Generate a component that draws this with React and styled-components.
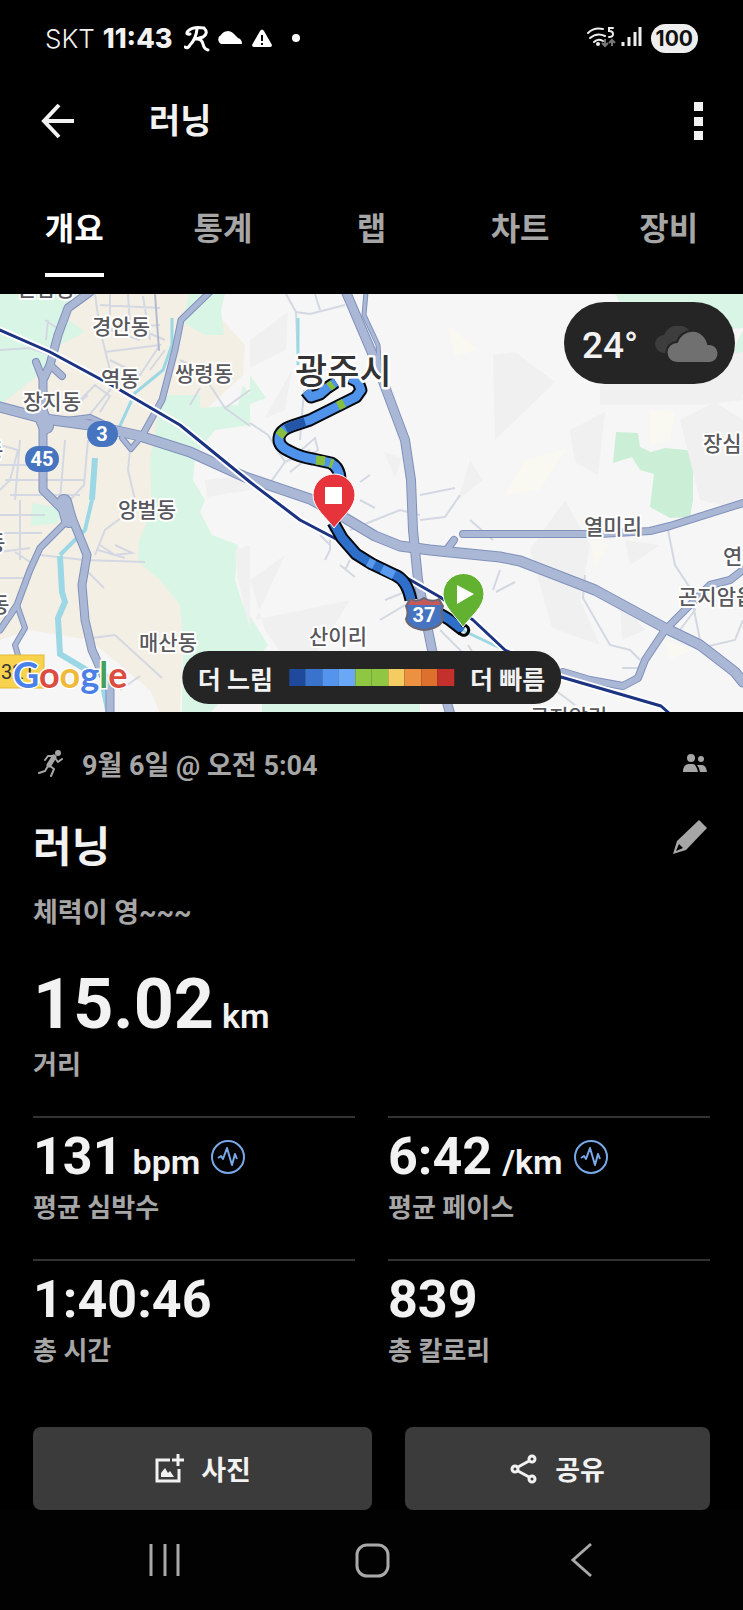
import React from 'react'
import styled, { createGlobalStyle } from 'styled-components'

const TABS = ['개요', '통계', '랩', '차트', '장비']

const SPEED_COLORS = ['#1f4a9c', '#3a73cb', '#5594ec', '#6aa7f7', '#8fc742', '#8fc742', '#f5cc62', '#ec9140', '#dd702c', '#c4302b']

const STATS = [
  { value: '131', unit: 'bpm', label: '평균 심박수', chart: true },
  { value: '6:42', unit: '/km', label: '평균 페이스', chart: true },
  { value: '1:40:46', label: '총 시간' },
  { value: '839', label: '총 칼로리' },
]

const PLACES = [
  { name: '안남동', x: 17, y: 296 },
  { name: '경안동', x: 92, y: 334 },
  { name: '역동', x: 101, y: 386 },
  { name: '쌍령동', x: 175, y: 381 },
  { name: '장지동', x: 23, y: 409 },
  { name: '양벌동', x: 118, y: 517 },
  { name: '매산동', x: 139, y: 650 },
  { name: '산이리', x: 309, y: 644 },
  { name: '열미리', x: 584, y: 534 },
  { name: '장심', x: 703, y: 451 },
  { name: '연', x: 723, y: 564 },
  { name: '곤지암읍', x: 678, y: 604 },
  { name: '곤지암리', x: 530, y: 724 },
  { name: '동', x: -16, y: 458 },
  { name: '동', x: -14, y: 550 },
  { name: '동', x: -10, y: 612 },
]

const ROADS = [
  { w: 9, d: 'M0 407 45 419 90 425 140 436 190 452 245 477 310 499 345 518 375 536 400 546 430 550 500 557 520 561 595 590 665 628 700 645 735 672 743 682' },
  { w: 7, d: 'M90 292 68 308 58 335 50 365 43 380V490L60 507 68 515' },
  { w: 6, d: 'M36 362 43 380 M50 365 62 376' },
  { w: 14, d: 'M40 412 46 426 M64 502 69 520' },
  { w: 5, d: 'M70 518 40 548 30 570 17 605 0 630' },
  { w: 7, d: 'M72 518 87 555 82 585 85 620 92 650 110 690V713' },
  { w: 4, d: 'M17 605 25 628 15 645 20 662 M50 422 90 417 105 424' },
  { w: 5, d: 'M210 292 181 320 175 350 162 400 142 436' },
  { w: 4, d: 'M142 436 131 449 122 438' },
  { w: 8, d: 'M346 292 375 360 387 392 405 440 411 480 413 530 418 580 432 650 450 713' },
  { w: 3, d: 'M366 292 364 315 378 345 380 375' },
  { w: 6, d: 'M463 534H600L650 531 670 526 743 503' },
  { w: 6, d: 'M448 548 454 540' },
  { w: 6, d: 'M743 570 730 580 710 585 690 605 665 630 645 660 638 678 623 686 590 680 563 672' },
]

const LANES =
  'M95 294 100 330 110 370 M110 294V330L140 340 M128 294 130 325 165 340 M100 305 160 308 M143 296 150 340 M95 330 160 325 M105 352 160 345 140 375 110 360' +
  'M0 350 30 348 70 362 M45 320 60 330 M48 320 46 340 M80 400 95 385 110 396 100 412 M85 420 110 390 125 375 M150 370 165 350 M88 395 70 410' +
  'M0 445 18 450 10 480 0 490 M5 480H85 M10 495H80 M20 440 15 500 M0 465H40 M65 440 60 500 M88 440 84 485 70 500' +
  'M0 515H45 M0 533H42 M20 500V560 M0 552 30 548 M0 578H30 M15 552 30 562 M40 555 85 560 145 562 M95 555 105 530 125 515 M98 550 125 558 M100 545 115 555 132 553 115 545' +
  'M88 572 104 588 M92 638 115 635 162 678 M120 690 140 676 M180 360 200 370 225 408 250 426 M200 388 190 405 M225 408 250 390 M130 450 128 470 135 500' +
  'M286 294 296 312 310 314 345 305 M315 294 320 310 M296 312 298 360 M304 390 300 440 M250 423 268 435 285 462 265 490 M285 462 310 450 M290 460 315 438 318 450 290 472' +
  'M330 530V550L325 560 M350 530 400 510 420 515 M360 482 370 475 M420 495 430 493 455 488 M360 500 375 508 M420 520 445 517 460 495 M320 535 330 545 M340 565 355 577' +
  'M385 600 410 590 M380 620 405 605 M345 570 350 560 M470 520 493 540 M500 570 493 590 M515 582 496 592 M668 530 675 565 690 588 695 610 680 630 M585 575 583 598 610 645 630 650 640 660 M680 632 705 647 735 640 743 620' +
  'M622 668H640 M690 590 700 640 M555 690 575 705 M440 630 500 690 M468 645 490 680'

const RIVERS = [
  { w: 3, d: 'M172 318V345L163 370 135 393 118 430' },
  { w: 6, d: 'M95 458 92 500' },
  { w: 4, d: 'M92 500 85 530 60 555' },
  { w: 6, d: 'M60 556 62 592 65 602 58 618 60 654 90 672' },
  { w: 5, d: 'M103 688 108 712' },
  { w: 3, d: 'M298 318V365 M462 630 500 648' },
]

const ROUTE_NORTH = 'M350 378 358 382 361 390 356 397 340 405 310 420 292 426Q280 430 279 438T289 451Q300 457 313 459L331 463Q340 468 340 480'
const ROUTE_LOOP = 'M306 391 311 397 320 394 327 388 336 382'
const ROUTE_SOUTH = 'M333 522 342 538 356 554 372 564 395 575Q407 580 411 600M440 614 450 620 463 630'

function MapDrawing() {
  return (
    <MapSvg viewBox="0 294 743 418" preserveAspectRatio="xMidYMid slice" role="img" aria-label="러닝 경로 지도">
      <rect y="290" width="743" height="430" fill="#f6f6f6" />
      <path d="M0 290H195L245 345 243 375 200 415 160 420 160 520 185 600 180 713H160L150 690 90 640 30 630 0 640Z" fill="#f4efe4" />
      <g fill="#d9f5e5">
        <path d="M0 290H80L62 315 85 332 50 350 55 362 0 405Z" />
        <path d="M32 503 60 508 58 523 31 526Z" />
        <path d="M190 290H226L221 310 224 335 205 335 182 322Z" />
        <path d="M165 395 200 395 200 408 238 405 243 385 250 395V425L215 430 195 455 193 480 205 500 200 512 212 535 238 545 235 580 243 605 268 645 210 713H182L183 640 180 605 160 580 138 562 139 540 152 510 150 460 158 415Z" />
        <path d="M250 375 266 398 250 404Z" />
        <path d="M613 290H743V328L722 330 705 345 640 340Z" />
        <path d="M743 330 733 350V370H743Z" />
        <path d="M262 704 420 704V713H262Z" />
      </g>
      <path d="M616 432 638 433 640 447 651 452 665 448 687 450 693 458V500L690 517 670 518 650 507 654 474 640 470 632 457 613 463Z" fill="#caefd6" />
      <g fill="#f0f0f0">
        <path d="M250 340 288 312 286 350 250 368Z" />
        <path d="M265 418 292 370 285 410Z" />
        <path d="M493 355 515 352 555 382 495 440Z" />
        <path d="M600 385 735 370 743 400 700 405 600 405Z" />
        <path d="M570 430 605 412 598 475 575 462Z" />
        <path d="M680 420 715 402 743 420V510L700 500Z" />
        <path d="M530 550 565 500 590 545 580 600 600 645 552 628Z" />
        <path d="M625 540 660 545 630 565Z M620 600 645 630 622 640Z" />
        <path d="M250 580 285 555 255 620 350 600 300 680 265 630Z" />
        <path d="M205 480 250 475 250 490 207 497Z M384 452 402 458 395 478Z M470 460 483 480 458 500Z" />
        <path d="M720 355 743 352V395L725 400Z M235 550 250 545V630L238 580Z" />
      </g>
      <g fill="#f9f9f2">
        <path d="M448 325 478 350 455 356Z M650 410 675 412 670 440 650 445Z M525 460 565 450 540 490 505 495Z" />
        <path d="M590 540 610 545 595 565Z M665 640 690 650 670 660Z" />
      </g>
      <path d={LANES} fill="none" stroke="#d3d8e2" strokeWidth="2" />
      {RIVERS.map((river) => (
        <path key={river.d} d={river.d} fill="none" stroke="#9bd7e4" strokeWidth={river.w} />
      ))}
      <g fill="none" strokeLinecap="round" strokeLinejoin="round">
        {ROADS.map((road) => (
          <path key={road.d} d={road.d} stroke="#8091bb" strokeWidth={road.w + 2} />
        ))}
        {ROADS.map((road) => (
          <path key={road.d} d={road.d} stroke="#aab8d6" strokeWidth={road.w} />
        ))}
        <path d="M155 294 159 350" stroke="#b5b9d0" strokeWidth="2" />
        <path d="M0 330 50 352 115 387 180 425 250 482 300 520 340 541 400 574 440 597 473 620 505 650 561 677 661 706 670 714" stroke="#fff" strokeWidth="7" />
        <path d="M0 330 50 352 115 387 180 425 250 482 300 520 340 541 400 574 440 597 473 620 505 650 561 677 661 706 670 714" stroke="#1b3380" strokeWidth="3" />
      </g>
      <g fill="none" strokeLinejoin="round">
        <g stroke="#05080f" strokeWidth="13">
          <path d={ROUTE_NORTH} />
          <path d={ROUTE_LOOP} />
          <path d={ROUTE_SOUTH} />
        </g>
        <g stroke="#4f93ea" strokeWidth="9">
          <path d={ROUTE_NORTH} />
          <path d={ROUTE_LOOP} />
        </g>
        <path d={ROUTE_SOUTH} stroke="#2e6fca" strokeWidth="9" />
        <path d="M305 422 292 426 286 429" stroke="#2456a8" strokeWidth="9" />
        <path d="M338 406 344 403 M284 430 279 436 M316 460 325 461 M330 463 333 464 M329 387 333 384" stroke="#86bf3e" strokeWidth="9" />
        <path d="M368 562 374 565 M382 569 394 575" stroke="#5a9bef" strokeWidth="9" />
        <path d="M461 626A5 5 0 1 1 459 632" stroke="#000" strokeWidth="3" />
      </g>
      <rect x="-2" y="655" width="46" height="33" fill="#f8d24c" stroke="#e2b93a" />
      <RoadNumber x="1" y="679" $dark>321</RoadNumber>
      <rect x="87" y="421" width="31" height="26" rx="13" fill="#4674c1" />
      <RoadNumber x="102" y="441" textAnchor="middle">3</RoadNumber>
      <rect x="25" y="446" width="34" height="26" rx="13" fill="#4674c1" />
      <RoadNumber x="42" y="466" textAnchor="middle">45</RoadNumber>
      {PLACES.map((place) => (
        <PlaceName key={place.name + place.y} x={place.x} y={place.y}>{place.name}</PlaceName>
      ))}
      <PlaceName x="295" y="384" $city>광주시</PlaceName>
      <path d="M410 599Q417 603 424 598 432 603 439 599L443 606Q440 613 443 619 441 628 424 630 408 628 406 619 409 613 406 606Z" fill="#4674c1" stroke="#6b6670" strokeWidth="2" />
      <path d="M411 600Q417 604 424 599 432 604 438 600L441 605H408Z" fill="#c75a58" />
      <RoadNumber x="424" y="622" textAnchor="middle">37</RoadNumber>
      <path d="M334 528C326 517 313 508 313 495A21 21 0 0 1 355 495C355 508 342 517 334 528Z" fill="#e6333c" stroke="#fff" strokeWidth="1" />
      <rect x="325" y="487" width="17" height="17" fill="#fff" />
      <path d="M463 627C456 616 443 607 443 594A20 20 0 0 1 484 594C484 607 471 616 463 627Z" fill="#62b130" stroke="#fff" strokeWidth="1" />
      <path d="M457 585V604L474 594Z" fill="#fff" />
      <Brand x="13" y="688">
        <tspan fill="#4a80e8">G</tspan>
        <tspan fill="#dc4c3f">o</tspan>
        <tspan fill="#efb93a">o</tspan>
        <tspan fill="#4a80e8">g</tspan>
        <tspan fill="#45a05a">l</tspan>
        <tspan fill="#dc4c3f">e</tspan>
      </Brand>
    </MapSvg>
  )
}

const StatusIcons = () => (
  <svg width="116" height="30" viewBox="184 23 116 30" fill="#fff" aria-hidden="true">
    <path d="M190 34Q185 35 188 31 193 26 204 28 209 33 203 37L196 39M197 29Q196 39 190 45 188 49 185 47M197 39Q202 39 203 44T208 50" fill="none" stroke="#fff" strokeWidth="3" strokeLinecap="round" />
    <path d="M221 44A5 5 0 0 1 221 35 8 8 0 0 1 234 34Q237 37 238 38 242 39 242 44Z" />
    <path fillRule="evenodd" d="M260 31Q262 28 264 31L272 45Q272 47 270 47H254Q252 47 252 45ZM261 35V41H263V35ZM261 43V45H263V43Z" />
    <circle cx="296" cy="38" r="4" />
  </svg>
)

const SignalIcons = () => (
  <svg width="56" height="26" viewBox="586 26 56 26" aria-hidden="true">
    <g fill="none" stroke="#eee" strokeWidth="2" strokeLinecap="round">
      <path d="M588 34Q594 28 603 30M590 39Q597 33 605 37M594 43Q598 39 603 42" />
      <path d="M613 29H609V32Q613 32 613 35T609 38" />
    </g>
    <circle cx="598" cy="45" r="2" fill="#eee" />
    <path d="M605 40V47M602 44 605 47 608 44M612 47V41M609 44 612 41 615 44" fill="none" stroke="#777" strokeWidth="2" />
    <path d="M623 43V47M629 38V47M635 33V47M640 28V47" stroke="#eee" strokeWidth="3" />
  </svg>
)

const PulseIcon = () => (
  <svg width="36" height="36" viewBox="0 0 36 36" fill="none" stroke="#78a9e8" strokeWidth="2" aria-hidden="true">
    <circle cx="18" cy="18" r="16" />
    <path d="M8 19 11 17 13 20 17 9 22 26 25 15 27 20" strokeLinejoin="round" />
  </svg>
)

const RunnerIcon = () => (
  <svg width="28" height="28" viewBox="0 0 28 28" fill="none" stroke="#a6a6a6" strokeLinecap="round" strokeLinejoin="round" aria-hidden="true">
    <circle cx="21" cy="4" r="3" fill="#a6a6a6" stroke="none" />
    <path d="M17 8 12 16" strokeWidth="5" />
    <path d="M17 7H11L8 11M18 9 21 13 25 10M13 17 17 20 14 27M11 17 8 22 2 24" strokeWidth="2" />
  </svg>
)

export default function App() {
  return (
    <Screen>
      <GlobalStyle />
      <StatusBar>
        <Carrier>SKT</Carrier>
        <Clock>11:43</Clock>
        <StatusIcons />
        <Spacer />
        <SignalIcons />
        <Battery>100</Battery>
      </StatusBar>

      <Header>
        <IconButton aria-label="뒤로">
          <svg width="34" height="36" viewBox="0 0 34 36" fill="none" stroke="#f2f2f2" strokeWidth="4">
            <path d="M18 2 3 18 18 34M3 18H33" />
          </svg>
        </IconButton>
        <PageTitle>러닝</PageTitle>
        <Spacer />
        <IconButton aria-label="더보기">
          <svg width="10" height="40" viewBox="0 0 10 40" fill="#f2f2f2">
            <path d="M1 1H10V10H1ZM1 16H10V25H1ZM1 30H10V39H1Z" />
          </svg>
        </IconButton>
      </Header>

      <Tabs role="tablist">
        {TABS.map((tab, i) => (
          <Tab key={tab} role="tab" aria-selected={i === 0} $active={i === 0}>{tab}</Tab>
        ))}
      </Tabs>

      <MapArea>
        <MapDrawing />
        <Weather>
          24°
          <svg width="66" height="38" viewBox="0 0 66 38" aria-hidden="true">
            <path d="M10 27A9 9 0 0 1 10 9 15 15 0 0 1 38 9L30 27Z" fill="#3d3d3d" />
            <path d="M23 37A10 10 0 0 1 23 16 16 16 0 0 1 54 18 9 9 0 0 1 56 37Z" fill="#707070" stroke="#252525" strokeWidth="2" />
          </svg>
        </Weather>
        <Legend>
          더 느림
          <SpeedScale>
            {SPEED_COLORS.map((color, i) => (
              <SpeedStep key={i} $color={color} />
            ))}
          </SpeedScale>
          더 빠름
        </Legend>
      </MapArea>

      <Details>
        <Meta>
          <RunnerIcon />
          <StartTime>9월 6일 @ 오전 5:04</StartTime>
          <Spacer />
          <svg width="26" height="20" viewBox="0 0 26 20" fill="#a6a6a6" aria-hidden="true">
            <circle cx="9" cy="5" r="4" />
            <circle cx="19" cy="6" r="3" />
            <path d="M1 19Q1 11 7 11H11Q14 11 16 19ZM15 12H20Q24 12 25 19H18Q17 14 15 12Z" />
          </svg>
        </Meta>

        <TitleRow>
          <ActivityTitle>러닝</ActivityTitle>
          <IconButton aria-label="편집">
            <svg width="36" height="36" viewBox="0 0 36 36" fill="#a6a6a6">
              <path fillRule="evenodd" d="M1 35 5 22 27 1 35 9 14 31ZM4 32 11 29 7 25Z" />
            </svg>
          </IconButton>
        </TitleRow>
        <Note>체력이 영~~~</Note>

        <Distance>
          15.02
          <Unit>km</Unit>
        </Distance>
        <StatLabel>거리</StatLabel>

        <StatGrid>
          {STATS.map((stat) => (
            <Stat key={stat.label}>
              <StatRow>
                <StatValue>
                  {stat.value}
                  {stat.unit && <Unit>{stat.unit}</Unit>}
                </StatValue>
                {stat.chart && <PulseIcon />}
              </StatRow>
              <StatLabel>{stat.label}</StatLabel>
            </Stat>
          ))}
        </StatGrid>

        <Actions>
          <ActionButton>
            <svg width="30" height="30" viewBox="0 0 30 30" fill="none" stroke="#f2f2f2" strokeWidth="3" aria-hidden="true">
              <path d="M16 6H3V27H25V15" />
              <path d="M18 6H30M24 0V12" />
              <path d="M7 23V19L11 14 14 19 16 17 20 23Z" fill="#f2f2f2" stroke="none" />
            </svg>
            사진
          </ActionButton>
          <ActionButton>
            <svg width="28" height="30" viewBox="0 0 28 30" fill="none" stroke="#f2f2f2" strokeWidth="3" aria-hidden="true">
              <circle cx="5" cy="15" r="3" />
              <circle cx="22" cy="5" r="3" />
              <circle cx="22" cy="25" r="3" />
              <path d="M8 13 19 7M8 17 19 23" />
            </svg>
            공유
          </ActionButton>
        </Actions>
      </Details>

      <SystemNav>
        <IconButton aria-label="최근 앱">
          <svg width="36" height="36" viewBox="0 0 36 36" stroke="#a9a9a9" strokeWidth="3">
            <path d="M4 2V34M18 2V34M31 2V34" />
          </svg>
        </IconButton>
        <IconButton aria-label="홈">
          <svg width="36" height="36" viewBox="0 0 36 36" fill="none" stroke="#a9a9a9" strokeWidth="3">
            <rect x="2" y="3" width="31" height="31" rx="10" />
          </svg>
        </IconButton>
        <IconButton aria-label="이전">
          <svg width="36" height="36" viewBox="0 0 36 36" fill="none" stroke="#a9a9a9" strokeWidth="3">
            <path d="M28 2 10 18 28 34" />
          </svg>
        </IconButton>
      </SystemNav>
    </Screen>
  )
}

const GlobalStyle = createGlobalStyle`
  * {
    box-sizing: border-box;
  }

  body {
    margin: 0;
    background: #000;
    color: #f2f2f2;
    font-family: Roboto, "Noto Sans CJK KR", sans-serif;
  }

  button {
    border: none;
    padding: 0;
    background: none;
    color: inherit;
    font: inherit;
  }

  svg {
    flex: none;
    display: block;
  }
`

const Screen = styled.main`
  display: flex;
  flex-direction: column;
  min-height: 100vh;
`

const Spacer = styled.span`
  flex: 1;
`

const StatusBar = styled.div`
  display: flex;
  align-items: center;
  height: 76px;
  padding: 0 45px;
  font-family: Inter, sans-serif;
  font-size: 26px;
`

const Carrier = styled.span`
  font-weight: 300;
  margin-right: 8px;
`

const Clock = styled.span`
  font-size: 27px;
  font-weight: 800;
  margin-right: 12px;
`

const Battery = styled.span`
  height: 29px;
  margin-left: 9px;
  padding: 0 5px;
  border-radius: 15px;
  background: #eee;
  color: #111;
  font-size: 21px;
  font-weight: 700;
  line-height: 29px;
`

const Header = styled.header`
  display: flex;
  align-items: center;
  height: 90px;
  padding: 0 40px 0 41px;
`

const IconButton = styled.button`
  display: flex;
  align-items: center;
`

const PageTitle = styled.h1`
  margin: 0 0 0 74px;
  font-size: 34px;
  font-weight: 700;
  line-height: 48px;
`

const Tabs = styled.nav`
  display: grid;
  grid-template-columns: repeat(5, 1fr);
  justify-items: center;
  height: 128px;
  padding-top: 35px;
`

const Tab = styled.button`
  height: 76px;
  border-bottom: 4px solid ${(p) => (p.$active ? '#fff' : 'transparent')};
  color: ${(p) => (p.$active ? '#fff' : '#a6a6a6')};
  font-size: 32px;
  font-weight: 700;
  line-height: 48px;
  padding-bottom: 16px;
`

const MapArea = styled.section`
  position: relative;
  height: 418px;
  overflow: hidden;
`

const MapSvg = styled.svg`
  width: 100%;
  height: 100%;
`

const PlaceName = styled.text`
  font-size: ${(p) => (p.$city ? 35 : 21)}px;
  font-weight: 500;
  fill: ${(p) => (p.$city ? '#333' : '#58585c')};
  stroke: #fff;
  stroke-width: ${(p) => (p.$city ? 5 : 4)}px;
  stroke-linejoin: round;
  paint-order: stroke;
`

const RoadNumber = styled.text`
  fill: ${(p) => (p.$dark ? '#333' : '#fff')};
  font-size: 20px;
  font-weight: ${(p) => (p.$dark ? 400 : 700)};
`

const Brand = styled.text`
  font-family: Lato, sans-serif;
  font-size: 36px;
  font-weight: 700;
  stroke: #fff;
  stroke-width: 3px;
  paint-order: stroke;
`

const Weather = styled.div`
  position: absolute;
  top: 8px;
  right: 8px;
  display: flex;
  align-items: center;
  justify-content: space-between;
  width: 171px;
  height: 82px;
  padding: 4px 15px 0 18px;
  border-radius: 41px;
  background: #252525;
  font-size: 37px;
  font-weight: 500;
`

const Legend = styled.div`
  position: absolute;
  bottom: 8px;
  left: 50%;
  transform: translateX(-50%);
  display: flex;
  align-items: center;
  gap: 16px;
  height: 53px;
  padding: 0 16px;
  border-radius: 27px;
  background: #252525;
  font-size: 25px;
  font-weight: 700;
  white-space: nowrap;
`

const SpeedScale = styled.div`
  display: grid;
  grid-template-columns: repeat(10, 1fr);
  width: 165px;
  height: 17px;
`

const SpeedStep = styled.span`
  background: ${(p) => p.$color};
`

const Details = styled.section`
  padding: 31px 33px 0;
`

const Meta = styled.div`
  display: flex;
  align-items: center;
  height: 40px;
  padding: 0 2px 0 4px;
  color: #a6a6a6;
`

const StartTime = styled.time`
  margin-left: 17px;
  font-size: 27px;
  font-weight: 700;
`

const TitleRow = styled.div`
  display: flex;
  justify-content: space-between;
  align-items: flex-start;
  margin-top: 36px;
  padding-right: 2px;
`

const ActivityTitle = styled.h2`
  margin: 0;
  font-size: 42px;
  font-weight: 700;
  line-height: 58px;
`

const Note = styled.p`
  margin: 16px 0 0;
  color: #a6a6a6;
  font-size: 27px;
  font-weight: 700;
  line-height: 40px;
`

const Distance = styled.div`
  display: flex;
  align-items: baseline;
  gap: 8px;
  margin-top: 30px;
  font-size: 70px;
  font-weight: 700;
  line-height: 82px;
`

const Unit = styled.small`
  font-size: 34px;
  font-weight: 600;
  line-height: 40px;
`

const StatLabel = styled.div`
  color: #a6a6a6;
  font-size: 26px;
  font-weight: 700;
  line-height: 40px;
`

const StatGrid = styled.div`
  display: grid;
  grid-template-columns: 1fr 1fr;
  column-gap: 33px;
  margin-top: 31px;
`

const Stat = styled.div`
  height: 143px;
  padding-top: 8px;
  border-top: 2px solid #333;
`

const StatRow = styled.div`
  display: flex;
  align-items: center;
  gap: 10px;
`

const StatValue = styled.div`
  display: flex;
  align-items: baseline;
  gap: 10px;
  font-size: 52px;
  font-weight: 700;
  line-height: 62px;
`

const Actions = styled.div`
  display: grid;
  grid-template-columns: 10fr 9fr;
  gap: 33px;
  margin-top: 25px;
`

const ActionButton = styled.button`
  display: flex;
  align-items: center;
  justify-content: center;
  gap: 17px;
  height: 83px;
  border-radius: 8px;
  background: #3b3b3b;
  font-size: 27px;
  font-weight: 700;
`

const SystemNav = styled.nav`
  display: flex;
  justify-content: space-between;
  align-items: center;
  height: 100px;
  padding: 0 144px 0 147px;
  background: #020202;
`
